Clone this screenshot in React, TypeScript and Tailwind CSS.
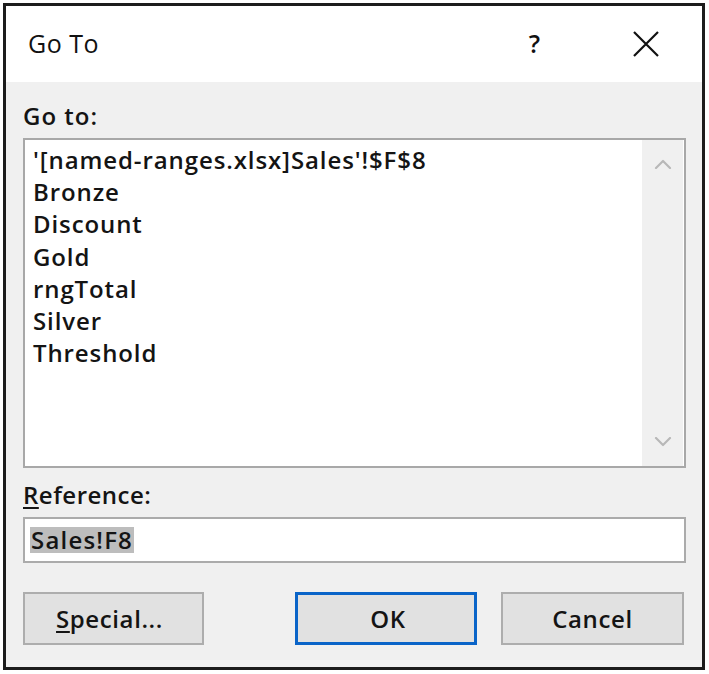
import React from 'react'

const items = [
  "'[named-ranges.xlsx]Sales'!$F$8",
  'Bronze',
  'Discount',
  'Gold',
  'rngTotal',
  'Silver',
  'Threshold',
]

function Chevron({ up }: { up?: boolean }) {
  return (
    <svg width="18" height="10" viewBox="0 0 18 10" fill="none">
      <path
        d={up ? 'M2 9 L9 2 L16 9' : 'M2 1 L9 8 L16 1'}
        stroke="#b8b8b8"
        strokeWidth="2.2"
        strokeLinecap="round"
        strokeLinejoin="round"
      />
    </svg>
  )
}

export default function App() {
  const font = { fontFamily: '"Open Sans", "Noto Sans", sans-serif' }
  return (
    <div className="w-[709px] h-[674px] bg-white p-[3px]" style={font}>
      <div className="w-[702px] h-[667px] border-[3px] border-[#1c1c1c] flex flex-col bg-[#f0f0f0]">
        {/* Title bar */}
        <div className="h-[76px] bg-white flex items-center pl-[22px] pr-[42px] text-[#111]">
          <span className="text-[25px] font-medium tracking-[0.5px]">Go To</span>
          <span className="ml-auto text-[25px] font-semibold mr-[92px]">?</span>
          <svg width="28" height="28" viewBox="0 0 28 28">
            <path d="M2 2 L26 26 M26 2 L2 26" stroke="#111" strokeWidth="2.2" />
          </svg>
        </div>

        {/* Body */}
        <div className="flex-1 flex flex-col pl-[17px] pr-[16px] text-[#141414] font-semibold">
          <div className="h-[56px] flex items-center pt-[12px] text-[24px] leading-none tracking-[1px]">Go to:</div>

          <div className="h-[330px] border-2 border-[#a8a8a8] bg-white flex">
            <div className="flex-1 pt-[4px] pl-[8px]">
              {items.map((it) => (
                <div key={it} className="h-[32.2px] flex items-center text-[24px] leading-none tracking-[0.9px]">
                  {it}
                </div>
              ))}
            </div>
            <div className="w-[41px] bg-[#f0f0f0] flex flex-col items-center justify-between py-[19px] mr-[1px]">
              <Chevron up />
              <Chevron />
            </div>
          </div>

          <div className="h-[49px] flex items-center pt-[4px] text-[24px] leading-none tracking-[0.5px]">
            <span>
              <span className="underline underline-offset-[3px] decoration-[1.5px]">R</span>eference:
            </span>
          </div>

          <div className="h-[46px] border-2 border-[#ababab] bg-white flex items-center pl-[5px]">
            <span className="bg-[#bdbdbd] text-[24px] leading-[26px] px-[1px] tracking-[1.2px]">Sales!F8</span>
          </div>

          <div className="mt-[29px] flex items-center text-[24px] leading-none tracking-[0.6px]">
            <button className="w-[181px] h-[53px] bg-[#e1e1e1] border-2 border-[#adadad] pr-[8px]">
              <span className="underline underline-offset-[3px] decoration-[1.5px]">S</span>pecial...
            </button>
            <button className="ml-[91px] w-[182px] h-[53px] bg-[#e1e1e1] border-[3px] border-[#0a64c8] pl-[4px]">
              OK
            </button>
            <button className="ml-[24px] w-[183px] h-[53px] bg-[#e1e1e1] border-2 border-[#adadad]">
              Cancel
            </button>
          </div>
        </div>
      </div>
    </div>
  )
}
